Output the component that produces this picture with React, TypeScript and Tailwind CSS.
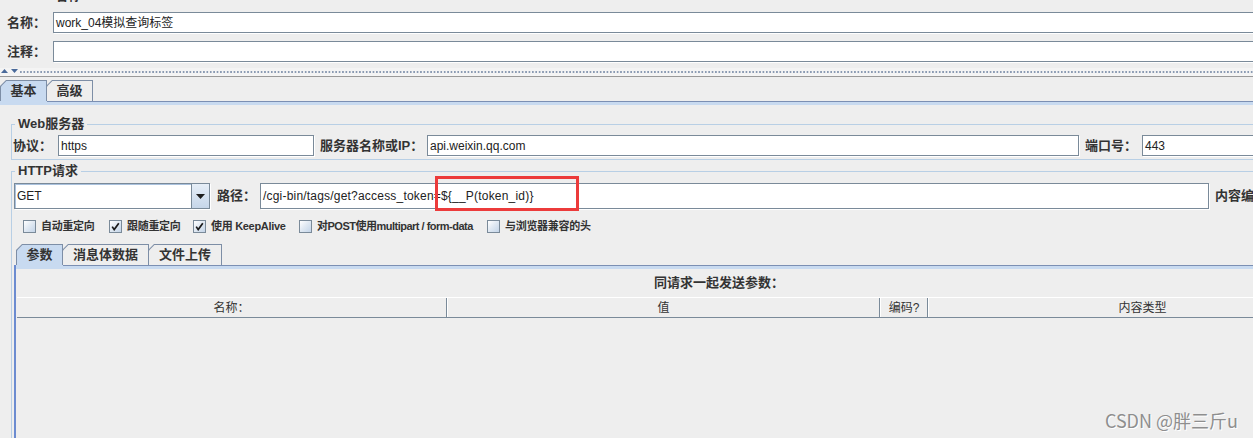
import React from "react";

function Label({ className = "", children }: { className?: string; children: React.ReactNode }) {
  return (
    <div className={`shrink-0 whitespace-nowrap text-[13px] leading-[16px] font-bold text-[#333333] ${className}`}>
      {children}
    </div>
  );
}

function Field({ className = "", children }: { className?: string; children?: React.ReactNode }) {
  return (
    <div
      className={`shrink-0 bg-white border border-[#7a8a99] shadow-[1px_1px_0_#ffffff] flex items-center pl-[2px] text-[12px] text-[#222222] whitespace-nowrap overflow-hidden ${className}`}
    >
      {children}
    </div>
  );
}

function Tab({ label, selected, w, first }: { label: string; selected?: boolean; w: string; first?: boolean }) {
  return (
    <div
      className={`${w} h-[21px] shrink-0 bg-[#7d8ea6] pt-px px-px [clip-path:polygon(6px_0,100%_0,100%_100%,0_100%,0_6px)] ${
        first ? "" : "-ml-px"
      }`}
    >
      <div
        className={`h-full flex items-center justify-center text-[13px] leading-[16px] font-bold text-[#333333] [clip-path:polygon(5.4px_0,100%_0,100%_100%,0_100%,0_5.4px)] ${
          selected ? "bg-[#c8daf0]" : "bg-[#eeeeee]"
        }`}
      >
        {label}
      </div>
    </div>
  );
}

function Check({ checked }: { checked?: boolean }) {
  return (
    <div className="w-[13px] h-[13px] shrink-0 border border-[#7a8a99] bg-[linear-gradient(135deg,#ffffff_0%,#e2eaf3_45%,#c3d4e8_100%)] flex items-center justify-center">
      {checked && (
        <svg width="9" height="9" viewBox="0 0 9 9">
          <path d="M1.2 4.6 L3.2 7.6 L7.8 1.2" stroke="#1a1a1a" strokeWidth="1.7" fill="none" />
        </svg>
      )}
    </div>
  );
}

function CheckItem({ w, checked, label, tight }: { w: string; checked?: boolean; label: string; tight?: boolean }) {
  return (
    <div className={`${w} shrink-0 flex items-center gap-[5px]`}>
      <Check checked={checked} />
      <span
        className={`whitespace-nowrap text-[11px] leading-[13px] font-bold text-[#333333] ${
          tight ? "tracking-[-0.5px]" : "tracking-[-0.3px]"
        }`}
      >
        {label}
      </span>
    </div>
  );
}

export default function App() {
  return (
    <div className="relative w-[1253px] h-[438px] overflow-hidden bg-[#eeeeee] text-[#333333] font-['Liberation_Sans','Noto_Sans_CJK_SC',sans-serif]">
      {/* cut-off row at the very top */}
      <div className="h-[12px] overflow-hidden pl-[55px]">
        <div className="-mt-[12px] text-[13px] leading-[16px] font-bold">名称</div>
      </div>

      {/* 名称 */}
      <div className="flex items-center h-[21px]">
        <Label className="w-[53px] pl-[7px]">名称：</Label>
        <Field className="w-[1220px] h-[21px]">work_04模拟查询标签</Field>
      </div>

      {/* 注释 */}
      <div className="mt-[8px] flex items-center h-[21px]">
        <Label className="w-[53px] pl-[7px]">注释：</Label>
        <Field className="w-[1220px] h-[21px]" />
      </div>

      {/* split divider */}
      <div className="mt-[6px] h-[8px] bg-[#f4f4f4] flex items-center">
        <svg width="20" height="6" viewBox="0 0 20 6" className="shrink-0 -mt-[2px]">
          <path d="M1 5 L4.5 1 L8 5 Z" fill="#4a6a9a" />
          <path d="M11 1 L18 1 L14.5 5 Z" fill="#4a6a9a" />
        </svg>
        <div className="flex-1 h-[2px] bg-[linear-gradient(to_right,#8b9bb3_1.5px,transparent_1.5px)] bg-[length:3.4px_2px]" />
      </div>
      <div className="h-px bg-[#999999]" />

      {/* main tabs */}
      <div className="mt-[3px] flex items-end">
        <Tab first selected w="w-[47px]" label="基本" />
        <Tab w="w-[47px]" label="高级" />
      </div>
      <div className="flex h-px">
        <div className="w-[47px] bg-[#c8daf0]" />
        <div className="flex-1 bg-[#7b8fb3]" />
      </div>
      <div className="h-[3px] bg-[#c8daf0]" />

      {/* content */}
      <div className="pl-[11px]">
        {/* Web服务器 group */}
        <div className="mt-[19px] w-[1500px] border border-[#b8cfe5] pl-px pb-[3px]">
          <div className="-mt-[9px] ml-[2px] px-[3px] w-fit bg-[#eeeeee] text-[13px] leading-[16px] font-bold">
            Web服务器
          </div>
          <div className="mt-[3px] flex items-center h-[21px]">
            <Label className="w-[45px]">协议：</Label>
            <Field className="w-[256px] h-[21px]">https</Field>
            <Label className="ml-[6px] w-[107px]">服务器名称或IP：</Label>
            <Field className="w-[652px] h-[21px]">api.weixin.qq.com</Field>
            <Label className="ml-[6px] w-[57px]">端口号：</Label>
            <Field className="w-[200px] h-[21px]">443</Field>
          </div>
        </div>

        {/* HTTP请求 group */}
        <div className="mt-[11px] w-[1500px] h-[400px] border border-[#b8cfe5]">
          <div className="-mt-[9px] ml-[3px] px-[3px] w-fit bg-[#eeeeee] text-[13px] leading-[16px] font-bold">
            HTTP请求
          </div>

          <div className="mt-[4px] flex items-center h-[26px]">
            <div className="ml-[2px] flex w-[196px] h-[26px] shrink-0 border border-[#7a8a99] shadow-[1px_1px_0_#ffffff]">
              <div className="flex-1 bg-white shadow-[inset_1px_1px_0_#a9c1dd] flex items-center pl-[2px] text-[12px] text-[#222222]">
                GET
              </div>
              <div className="w-[18px] border-l border-[#7a8a99] bg-[linear-gradient(#e6eef7,#c6d6e9)] flex items-center justify-center">
                <svg width="9" height="5" viewBox="0 0 9 5">
                  <path d="M0 0 H9 L4.5 5 Z" fill="#1e1e1e" />
                </svg>
              </div>
            </div>
            <Label className="ml-[7px] w-[43px]">路径：</Label>
            <Field className="w-[949px] h-[26px] tracking-[0.2px]">/cgi-bin/tags/get?access_token=${"{"}__P(token_id){"}"}</Field>
            <Label className="ml-[6px]">内容编码：</Label>
          </div>

          <div className="mt-[11px] flex items-center h-[13px] pl-[11px]">
            <CheckItem w="w-[86px]" label="自动重定向" />
            <CheckItem w="w-[84px]" checked label="跟随重定向" />
            <CheckItem w="w-[106px]" checked label="使用 KeepAlive" />
            <CheckItem w="w-[188px]" tight label="对POST使用multipart / form-data" />
            <CheckItem w="w-[150px]" label="与浏览器兼容的头" />
          </div>

          {/* sub tabbed pane */}
          <div className="mt-[11px] ml-[2px]">
            <div className="flex items-end pl-[2px]">
              <Tab first selected w="w-[47px]" label="参数" />
              <Tab w="w-[87px]" label="消息体数据" />
              <Tab w="w-[74px]" label="文件上传" />
            </div>
            <div className="flex h-px">
              <div className="w-[2px] bg-[#6b8bd0]" />
              <div className="w-[47px] bg-[#c8daf0]" />
              <div className="flex-1 bg-[#7b8fb3]" />
            </div>
            <div className="border-l-2 border-[#6b8bd0] h-[300px]">
              <div className="h-[3px] bg-[#c8daf0]" />
              <div className="mt-[6px] w-[1406px] text-center text-[13px] leading-[16px] font-bold">
                同请求一起发送参数：
              </div>
              <div className="mt-[6px] ml-px flex h-[21px] border-t border-white border-b border-b-[#7a8a99] text-[12px] text-[#333333]">
                <div className="w-[430px] flex items-center justify-center border-r border-[#7a8a99]">名称：</div>
                <div className="w-[433px] flex items-center justify-center border-l border-white border-r border-r-[#7a8a99]">值</div>
                <div className="w-[48px] flex items-center justify-center border-l border-white border-r border-r-[#7a8a99]">编码?</div>
                <div className="w-[428px] flex items-center justify-center border-l border-white">内容类型</div>
              </div>
            </div>
          </div>
        </div>
      </div>

      {/* red highlight annotation */}
      <div className="absolute left-[435px] top-[176px] w-[144px] h-[35px] border-[3px] border-[#ec3b3b]" />

      {/* watermark */}
      <div className="absolute right-[15px] bottom-[7px] text-[18px] leading-[22px] text-[#8e8e8e] font-['Noto_Sans_CJK_SC',sans-serif] [text-shadow:1px_1px_0_#ffffff]">
        CSDN @胖三斤u
      </div>
    </div>
  );
}
